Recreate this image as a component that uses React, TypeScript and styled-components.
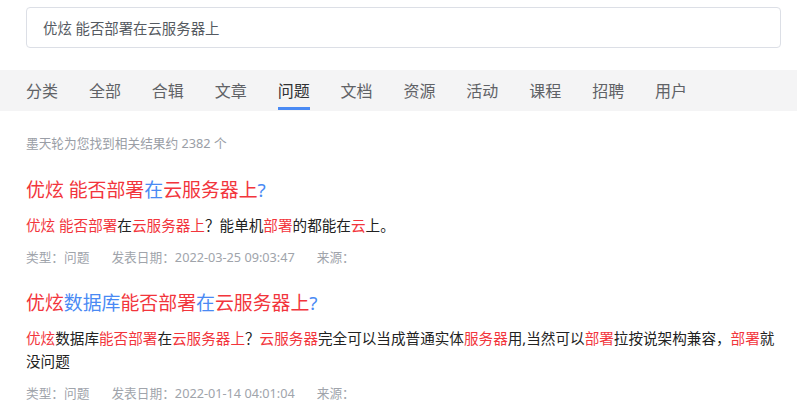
import React from "react";
import styled, { createGlobalStyle } from "styled-components";

const Global = createGlobalStyle`
  html, body { margin: 0; padding: 0; background: #fff; }
  body { font-family: "Noto Sans", "Noto Sans CJK SC", sans-serif; }
`;

const Page = styled.div`
  display: flex;
  flex-direction: column;
  padding-top: 7px;
`;

const SearchWrap = styled.div`
  padding: 0 16px 0 26px;
`;

const SearchBox = styled.div`
  height: 41px;
  box-sizing: border-box;
  border: 1px solid #dcdfe6;
  border-radius: 4px;
  display: flex;
  align-items: center;
  padding-left: 16px;
  font-size: 14.4px;
  color: #555a61;
`;

const TabBar = styled.nav`
  margin-top: 22px;
  height: 41px;
  background: #f4f4f5;
  display: flex;
  gap: 30.9px;
  padding-left: 26px;
`;

const Tab = styled.div<{ $active?: boolean }>`
  position: relative;
  display: flex;
  align-items: center;
  font-size: 16px;
  color: ${(p) => (p.$active ? "#303133" : "#606266")};
  padding-bottom: 2px;
  &::after {
    content: "";
    display: ${(p) => (p.$active ? "block" : "none")};
    position: absolute;
    left: 0;
    right: 0;
    bottom: 1px;
    height: 3px;
    background: #4a8af4;
  }
`;

const Results = styled.div`
  padding: 0 16px 0 26px;
  display: flex;
  flex-direction: column;
`;

const Count = styled.div`
  margin-top: 22px;
  font-size: 12.7px;
  line-height: 20px;
  color: #9a9ea6;
`;

const Item = styled.div`
  display: flex;
  flex-direction: column;
  margin-top: 23px;
  & + & {
    margin-top: 22px;
  }
`;

const Title = styled.div`
  font-size: 18.9px;
  line-height: 28px;
  color: #4a8af4;
`;

const Snippet = styled.div`
  margin-top: 10px;
  font-size: 14.6px;
  line-height: 23px;
  color: #222;
`;

const Hl = styled.span`
  color: #f2353c;
`;

const Meta = styled.div`
  margin-top: 10px;
  display: flex;
  gap: 22px;
  font-size: 12.7px;
  line-height: 20px;
  color: #a0a4ab;
`;

const tabs = ["分类", "全部", "合辑", "文章", "问题", "文档", "资源", "活动", "课程", "招聘", "用户"];

export default function App() {
  return (
    <Page>
      <Global />
      <SearchWrap>
        <SearchBox>优炫 能否部署在云服务器上</SearchBox>
      </SearchWrap>
      <TabBar>
        {tabs.map((t) => (
          <Tab key={t} $active={t === "问题"}>
            {t}
          </Tab>
        ))}
      </TabBar>
      <Results>
        <Count>墨天轮为您找到相关结果约 2382 个</Count>
        <Item>
          <Title>
            <Hl>优炫 能否部署</Hl>在<Hl>云服务器上</Hl>?
          </Title>
          <Snippet>
            <Hl>优炫 能否部署</Hl>在<Hl>云服务器上</Hl>？能单机<Hl>部署</Hl>的都能在<Hl>云</Hl>上。
          </Snippet>
          <Meta>
            <span>类型：问题</span>
            <span>发表日期：2022-03-25 09:03:47</span>
            <span>来源：</span>
          </Meta>
        </Item>
        <Item>
          <Title>
            <Hl>优炫</Hl>数据库<Hl>能否部署</Hl>在<Hl>云服务器上</Hl>?
          </Title>
          <Snippet>
            <Hl>优炫</Hl>数据库<Hl>能否部署</Hl>在<Hl>云服务器上</Hl>？<Hl>云服务器</Hl>完全可以当成普通实体<Hl>服务器</Hl>用,当然可以<Hl>部署</Hl>拉按说架构兼容，<Hl>部署</Hl>就没问题
          </Snippet>
          <Meta>
            <span>类型：问题</span>
            <span>发表日期：2022-01-14 04:01:04</span>
            <span>来源：</span>
          </Meta>
        </Item>
      </Results>
    </Page>
  );
}
